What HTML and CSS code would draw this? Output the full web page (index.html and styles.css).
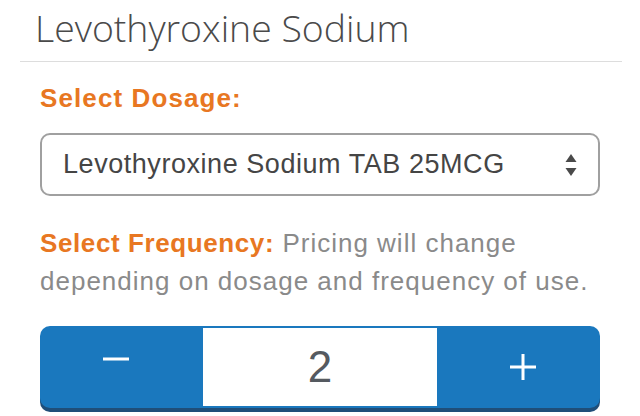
FILE: index.html
```html
<!DOCTYPE html>
<html>
<head>
<meta charset="utf-8">
<link rel="stylesheet" href="styles.css">
</head>
<body>
<div class="page">
  <h1 class="title">Levothyroxine Sodium</h1>
  <div class="content">
    <div class="label">Select Dosage:</div>
    <div class="select">
      <span class="select-text">Levothyroxine Sodium TAB 25MCG</span>
      <svg class="arrows" width="12" height="26" viewBox="0 0 12 26"><path d="M6 2 L11.5 10 L0.5 10 Z" fill="#4a4a4a"/><path d="M6 24 L11.5 16 L0.5 16 Z" fill="#4a4a4a"/></svg>
    </div>
    <p class="freq"><span class="label-inline">Select Frequency:</span> Pricing will change depending on dosage and frequency of use.</p>
    <div class="stepper">
      <div class="btn minus"><svg width="26" height="4" viewBox="0 0 26 4"><rect width="26" height="3" y="0.5" fill="#fff"/></svg></div>
      <div class="value">2</div>
      <div class="btn plus"><svg width="26" height="26" viewBox="0 0 26 26"><rect x="11.5" width="3" height="26" fill="#fff"/><rect y="11.5" width="26" height="3" fill="#fff"/></svg></div>
    </div>
  </div>
</div>
</body>
</html>
```
FILE: styles.css
```css
html, body { margin: 0; padding: 0; background: #fff; }
body { width: 640px; height: 416px; overflow: hidden; font-family: "Liberation Sans", Arial, sans-serif; }
.page { padding: 0 18px 0 20px; }
.title {
  margin: 0;
  padding: 5px 0 0 15px;
  height: 56px;
  font-family: "Open Sans", sans-serif;
  font-weight: 300;
  font-size: 37.4px;
  line-height: 46px;
  color: #4a4a4a;
  border-bottom: 1.5px solid #ddd;
}
.content { padding: 22px 0 0 20px; width: 560px; }
.label { color: #e87722; font-weight: bold; font-size: 26px; line-height: 28px; letter-spacing: 1.1px; }
.select {
  margin-top: 21px;
  height: 59px;
  border: 2px solid #a0a0a0;
  border-radius: 10px;
  display: flex;
  align-items: center;
  justify-content: space-between;
  padding: 0 21px 0 21px;
}
.select-text { font-size: 27px; color: #454545; letter-spacing: 0.55px; }
.freq { margin: 28px 0 0; font-size: 26px; line-height: 38px; color: #8a8a8a; letter-spacing: 1px; }
.label-inline { color: #e87722; font-weight: bold; letter-spacing: 0.6px; }
.stepper {
  margin-top: 26px;
  height: 78px;
  display: flex;
  background: #1a78be;
  border-radius: 10px;
  box-shadow: 0 4px 0 #1f4e79;
  padding: 2px 0;
}
.btn { width: 163px; display: flex; align-items: center; justify-content: center; }
.minus { padding-bottom: 16px; padding-right: 12px; box-sizing: border-box; }
.plus { padding-left: 8px; box-sizing: border-box; }
.value {
  flex: 1;
  background: #fff;
  display: flex;
  align-items: center;
  justify-content: center;
  font-size: 44px;
  color: #555a60;
}
```
